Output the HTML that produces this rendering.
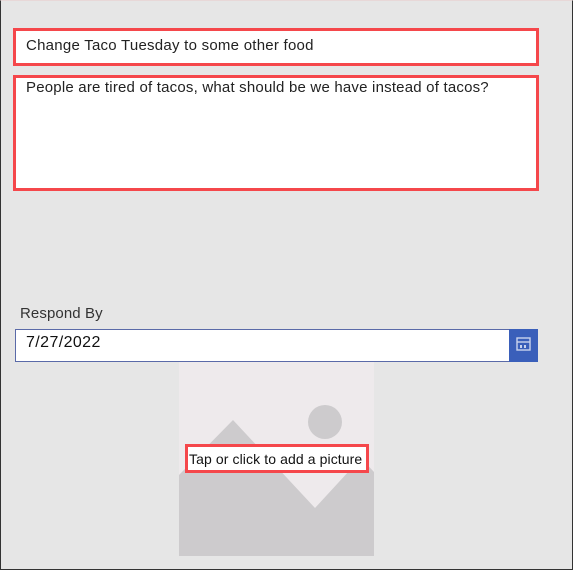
<!DOCTYPE html>
<html><head><style>
body{margin:0;width:573px;height:571px;overflow:hidden;background:#fff;font-family:"Liberation Sans",sans-serif;}
.page{position:absolute;left:0;top:0;width:571px;height:568px;background:#e6e6e6;border:1px solid #333;border-top:1px solid #e8d8d8;}
.red{position:absolute;border:3px solid #f5474b;background:#fff;box-sizing:border-box;}
.t{position:absolute;font-size:15px;color:#222;white-space:nowrap;}
</style></head><body>
<div class="page"></div>
<div class="red" style="left:13px;top:28px;width:526px;height:38px;"></div>
<div class="t" style="left:26px;top:37px;letter-spacing:0.25px;">Change Taco Tuesday to some other food</div>
<div class="red" style="left:13px;top:75px;width:526px;height:116px;"></div>
<div class="t" style="left:26px;top:79px;letter-spacing:0.2px;">People are tired of tacos, what should be we have instead of tacos?</div>
<div class="t" style="left:20px;top:305px;color:#333;letter-spacing:0.1px;">Respond By</div>
<div style="position:absolute;left:15px;top:329px;width:522px;height:33px;border:1px solid #5a6aa8;box-sizing:border-box;background:#fff;"></div>
<div class="t" style="left:26px;top:334px;font-size:16px;color:#111;letter-spacing:0.4px;">7/27/2022</div>
<div style="position:absolute;left:509px;top:329px;width:29px;height:33px;background:#3a5fba;"></div>
<svg style="position:absolute;left:516px;top:337px" width="15" height="15" viewBox="0 0 15 15"><rect x="1" y="1" width="13" height="12" fill="none" stroke="#c9d3ee" stroke-width="1.4"/><line x1="1" y1="5" x2="14" y2="5" stroke="#c9d3ee" stroke-width="1.4"/><rect x="4" y="8" width="2" height="3" fill="#c9d3ee"/><rect x="8" y="8" width="2" height="3" fill="#c9d3ee"/></svg>
<svg style="position:absolute;left:179px;top:362px" width="195" height="194" viewBox="0 0 195 194">
<rect width="195" height="194" fill="#eeeaec"/>
<circle cx="146" cy="60" r="17" fill="#cdcbcd"/>
<polygon points="0,113 54,58 136,146 182,96 195,110 195,194 0,194" fill="#cdcbcd"/>
</svg>
<div class="red" style="left:185px;top:444px;width:184px;height:29px;"></div>
<div class="t" style="left:189px;top:451px;font-size:14px;color:#111;letter-spacing:0.1px;">Tap or click to add a picture</div>
</body></html>
